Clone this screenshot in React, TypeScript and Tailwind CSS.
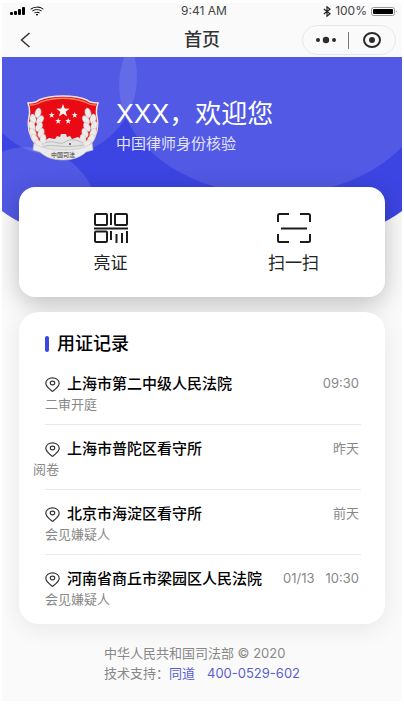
import { BsWifi } from "react-icons/bs";

type RecordItem = {
  place: string;
  reason: string;
  time: string;
  outdent?: boolean;
};

const records: RecordItem[] = [
  { place: "上海市第二中级人民法院", reason: "二审开庭", time: "09:30" },
  { place: "上海市普陀区看守所", reason: "阅卷", time: "昨天", outdent: true },
  { place: "北京市海淀区看守所", reason: "会见嫌疑人", time: "前天" },
  { place: "河南省商丘市梁园区人民法院", reason: "会见嫌疑人", time: "01/13   10:30" },
];

// x, y and tilt of the grains on the left side, mirrored on the right
const grains = [
  [11, 18, 15],
  [6, 24, -10],
  [13, 25, 35],
  [5, 31, -20],
  [12, 32, 30],
  [6, 38, -25],
  [14, 38, 20],
  [8, 44, -35],
  [16, 44, 10],
  [12, 49, -45],
];

function Emblem() {
  return (
    <svg viewBox="0 0 72 66" className="w-[72px] h-[66px] shrink-0">
      <path
        d="M36 1 C44 1 53 2 60 5 C62 7 66 8 71 8 C69 13 69 17 70 22 C73 37 66 51 54 56 C43 60 29 60 18 56 C6 51 -1 37 2 22 C3 17 3 13 1 8 C6 8 10 7 12 5 C19 2 28 1 36 1 Z"
        fill="#ea0a16"
        stroke="#f3e3dc"
        strokeWidth="1.500"
      />
      <path d="M3 10 C8 10 11 9 14 7 C27 2 45 2 58 7 C61 9 64 10 69 10" fill="none" stroke="#ef8455" strokeWidth="1.500" />
      {/* wheat */}
      <g fill="#efebe9" stroke="#c4bcb9" strokeWidth="0.4">
        {grains.map(([x, y, a]) => (
          <g key={`${x}-${y}`}>
            <ellipse cx={x} cy={y} rx="3" ry="5" transform={`rotate(${a} ${x} ${y})`} />
            <ellipse cx={72 - x} cy={y} rx="3" ry="5" transform={`rotate(${-a} ${72 - x} ${y})`} />
          </g>
        ))}
      </g>
      <g fill="#fff3ee">
        <path id="star" d="M36 9 l1.700 4.600 4.900.1 -3.900 3 1.400 4.700 -4.100-2.700 -4.100 2.700 1.400-4.700 -3.900-3 4.900-.1z" />
        <use href="#star" transform="translate(8.500 13) scale(.45)" />
        <use href="#star" transform="translate(31.500 13) scale(.45)" />
        <use href="#star" transform="translate(15 19) scale(.45)" />
        <use href="#star" transform="translate(25 19) scale(.45)" />
      </g>
      {/* gate and wall */}
      <path
        d="M17 46 L22 43 28 44 30 41 33 42 34 39 39 39 40 42 43 41 45 44 51 42 55 45 58 44 58 56 14 56 Z"
        fill="#e3e3e3"
      />
      <path d="M18 48 C26 44 32 51 38 47 S50 45 56 48 M16 52 C24 48 34 54 57 50" fill="none" stroke="#b0b0b0" strokeWidth="0.8" />
      <circle cx="43" cy="49" r="1" fill="#3d5a52" />
      <path
        d="M7 48 C15 54 25 55 36 55 C47 55 57 54 65 48 L66 55 L59 57 C54 62 46 65 36 65 C26 65 18 62 13 57 L6 55 Z"
        fill="#ececec"
        stroke="#c6c3c1"
        strokeWidth="0.6"
      />
      <text x="36" y="62" textAnchor="middle" fontSize="6" fill="#6e6864" fontWeight="700">
        中国司法
      </text>
    </svg>
  );
}

function QrIcon() {
  return (
    <svg viewBox="0 0 36 30" className="w-9 h-[30px]" fill="none" stroke="#1c1c1c" strokeWidth="2">
      <rect x="2" y="1" width="12" height="11" rx="1" />
      <path d="M18 0v12" />
      <rect x="22" y="1" width="12" height="11" rx="1" />
      <path d="M1 15.500h34" />
      <rect x="2" y="18.500" width="12" height="10.500" rx="1" />
      <path d="M18 18v9M23.500 21v9M29 20v10M34 18v12" />
    </svg>
  );
}

function ScanIcon() {
  return (
    <svg viewBox="0 0 36 30" className="w-9 h-[30px]" fill="none" stroke="#1c1c1c" strokeWidth="2">
      <path d="M13 1H3.500Q2 1 2 2.500V9M24 1h8.500Q34 1 34 2.500V9M2 21v6.500Q2 29 3.500 29H13M24 29h8.500Q34 29 34 27.500V21M5 15.500h26" />
    </svg>
  );
}

function PinIcon() {
  return (
    <svg viewBox="0 0 15 15" className="w-[15px] h-[15px] shrink-0" fill="none" stroke="#333" strokeWidth="1.200">
      <path d="M7.500 14.300C5 12.400 .8 9.700 .8 6.300C.8 3.200 3.800 .8 7.500 .8S14.200 3.200 14.200 6.300C14.200 9.700 10 12.400 7.500 14.300Z" />
      <ellipse cx="7.500" cy="6" rx="2.200" ry="1.800" />
    </svg>
  );
}

export default function App() {
  return (
    <div className="bg-white px-0.5 py-[3px] font-['Inter','Noto_Sans_CJK_SC',sans-serif] text-[#222]">
      <div className="bg-[#fafafa] pb-[18px] overflow-hidden">
        {/* status bar */}
        <div className="grid grid-cols-3 items-center h-4 pl-2 pr-1 text-xs text-[#444]">
          <div className="flex items-center gap-1 text-black">
            <svg viewBox="0 0 16 8" className="w-4 h-2">
              <rect x="0" y="5" width="3" height="3" rx="1" />
              <rect x="4" y="4" width="3" height="4" rx="1" />
              <rect x="8" y="2" width="3" height="6" rx="1" />
              <rect x="12" y="0" width="3" height="8" rx="1" />
            </svg>
            <BsWifi size={14} />
          </div>
          <span className="text-center">9:41 AM</span>
          <div className="flex items-center justify-end gap-1">
            <svg viewBox="0 0 8 11" className="w-2 h-[11px]" fill="none" stroke="#222" strokeWidth="1.200">
              <path d="M.8 3 7 7.800 4 10.200V.8L7 3.200 .8 8" />
            </svg>
            <span>100%</span>
            <svg viewBox="0 0 27 9" className="w-[27px] h-[9px]">
              <rect x=".5" y=".5" width="23" height="8" rx="2" fill="none" stroke="#999" />
              <rect x="2" y="2" width="20" height="5" rx="1" fill="#000" />
              <path d="M25 3v3q1.500-1.500 0-3z" fill="#999" />
            </svg>
          </div>
        </div>

        <header className="grid grid-cols-3 items-center h-[38px] pt-1 px-1.5">
          <button aria-label="返回" className="w-fit pl-3">
            <svg viewBox="0 0 10 16" className="w-2.5 h-4" fill="none" stroke="#333" strokeWidth="1.500">
              <path d="M9.500 1 1.500 8l8 7" />
            </svg>
          </button>
          <h1 className="text-center text-lg leading-6 font-medium text-[#333]">首页</h1>
          <div className="flex items-center justify-self-end w-[94px] h-[30px] rounded-full border border-[#e8e8e8]">
            <button aria-label="更多" className="flex-1 flex justify-center">
              <svg viewBox="0 0 20 8" className="w-5 h-2" fill="#2b2b2b">
                <circle cx="2" cy="4" r="2" />
                <circle cx="10" cy="4" r="3.200" />
                <circle cx="18" cy="4" r="2" />
              </svg>
            </button>
            <span className="w-px h-[17px] bg-[#777]"></span>
            <button aria-label="关闭" className="flex-1 flex justify-center">
              <svg viewBox="0 0 18 16" className="w-[18px] h-4">
                <ellipse cx="9" cy="8" rx="8" ry="7" fill="none" stroke="#2b2b2b" strokeWidth="2" />
                <circle cx="9" cy="8" r="3" fill="#2b2b2b" />
              </svg>
            </button>
          </div>
        </header>

        <main className="relative">
          <svg
            viewBox="0 0 400 180"
            preserveAspectRatio="none"
            className="absolute inset-x-0 top-0 w-full h-[180px]"
            aria-hidden="true"
          >
            <defs>
              <clipPath id="hero">
                <path d="M0 0H400V154Q376 172 340 180H60Q24 172 0 154Z" />
              </clipPath>
            </defs>
            <g clipPath="url(#hero)">
              <rect width="400" height="180" fill="#3c45e2" />
              <g fill="#fff" fillOpacity=".11">
                <circle cx="56" cy="20" r="79" />
                <ellipse cx="272" cy="28" rx="155" ry="110" />
                <circle cx="26" cy="160" r="70" />
              </g>
            </g>
          </svg>

          <section className="relative flex gap-[17px] h-[130px] pl-[25px] pt-[38px] text-white">
            <Emblem />
            <div className="pt-px">
              <h2 className="text-[26px] leading-9">XXX，欢迎您</h2>
              <p className="pt-0.5 text-[15px] leading-5 text-[#e2e4fc]">中国律师身份核验</p>
            </div>
          </section>

          <section className="relative flex mx-[17px] h-[110px] rounded-2xl bg-white shadow-[0_6px_24px_rgba(0,0,0,0.24)]">
            <button className="flex-1 flex flex-col items-center pt-[26px] gap-2 text-[17px] leading-6">
              <QrIcon />
              亮证
            </button>
            <button className="flex-1 flex flex-col items-center pt-[26px] gap-2 text-[17px] leading-6">
              <ScanIcon />
              扫一扫
            </button>
          </section>

          <section className="relative mx-[17px] mt-[15px] pl-[26px] pr-6 pt-5 pb-4 rounded-[20px] bg-white shadow-[0_4px_24px_rgba(0,0,0,0.08)]">
            <h2 className="flex items-center gap-2 text-lg leading-6 font-medium text-black">
              <span className="w-1 h-4 rounded-sm bg-[#3c45e2]"></span>
              用证记录
            </h2>
            <ul className="pt-1 divide-y divide-[#e9e9e9]">
              {records.map((item) => (
                <li key={item.place} className="pt-[13px] pb-[11px] last:pb-0">
                  <div className="flex items-center gap-[7px] h-[22px]">
                    <PinIcon />
                    <span className="flex-1 text-[15px] font-medium text-black whitespace-nowrap">{item.place}</span>
                    <span className="text-[13px] text-[#888] pr-0.5 whitespace-pre">{item.time}</span>
                  </div>
                  <p className={`text-[13px] leading-[18px] text-[#888] ${item.outdent ? "-ml-3" : ""}`}>{item.reason}</p>
                </li>
              ))}
            </ul>
          </section>
        </main>

        <footer className="flex justify-center pt-[19px] text-[13px] leading-5 text-[#888]">
          <div>
            <p>中华人民共和国司法部 © 2020</p>
            <p className="flex">
              技术支持：
              <a href="#" className="text-[#5a5fd0]">同道</a>
              <a href="tel:4000529602" className="ml-3 text-[#5a5fd0]">400-0529-602</a>
            </p>
          </div>
        </footer>
      </div>
    </div>
  );
}
